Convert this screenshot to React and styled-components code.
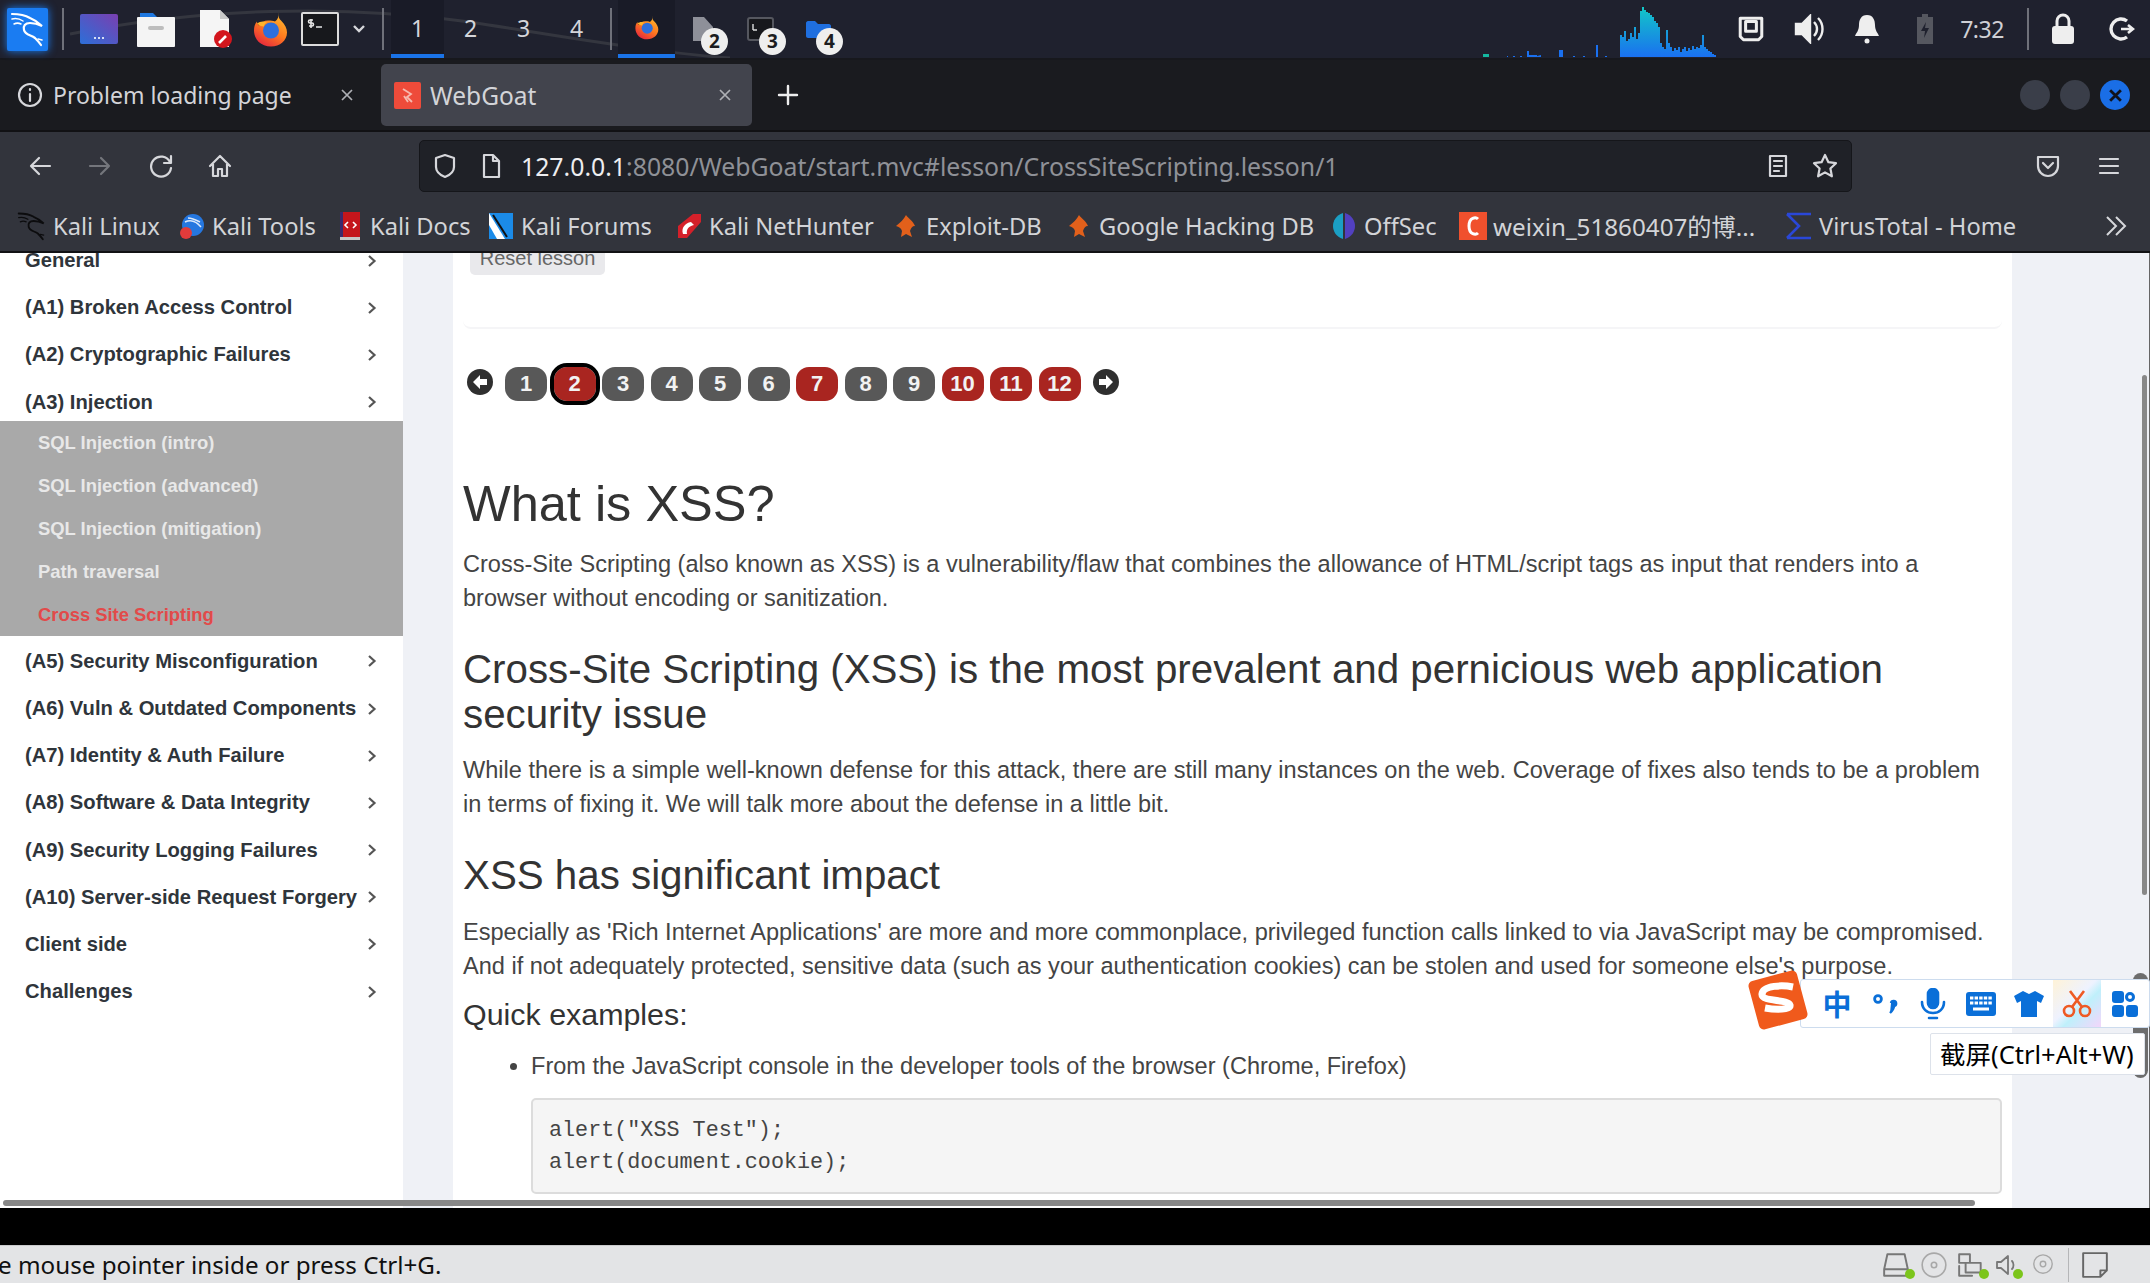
import React from "react";
import styled, { createGlobalStyle } from "styled-components";

const GlobalStyle = createGlobalStyle`
  html, body { margin: 0; padding: 0; background: #000; }
  * { box-sizing: border-box; }
`;

const Screen = styled.div`
  position: relative;
  width: 2150px;
  height: 1283px;
  overflow: hidden;
  display: flex;
  flex-direction: column;
  font-family: "Liberation Sans", Arial, sans-serif;
`;

/* ---- desktop panel ---- */
const Panel = styled.div`
  position: relative;
  flex: 0 0 60px;
  display: flex;
  align-items: flex-start;
  background: #1f212e;
  border-bottom: 2px solid #17181d;
`;

const PanelSwirl = styled.svg`
  position: absolute;
  left: 0;
  top: 0;
`;

const PanelGroup = styled.div`
  position: relative;
  display: flex;
  align-items: center;
  height: 58px;
`;

const KaliTile = styled.div`
  width: 41px;
  height: 43px;
  margin: 0 0 0 7px;
  border-radius: 2px;
  background: #1a7cf2;
  box-shadow: 0 0 8px #1a7cf2;
  display: flex;
  align-items: center;
  justify-content: center;
`;

const PanelSep = styled.div`
  width: 2px;
  height: 42px;
  margin-left: ${(p) => p.$ml}px;
  background: #6f717a;
`;

const Launcher = styled.div`
  display: flex;
  align-items: center;
  justify-content: center;
  width: ${(p) => p.$w}px;
  margin-left: ${(p) => p.$ml}px;
`;

const Workspaces = styled.div`
  display: flex;
  margin-left: 7px;
`;

const WorkspaceBtn = styled.div`
  width: 53px;
  height: 58px;
  display: flex;
  align-items: center;
  justify-content: center;
  color: #d4d5da;
  font-family: "Noto Sans", sans-serif;
  font-size: 23px;
  background: ${(p) => (p.$active ? "#191b27" : "transparent")};
  border-bottom: 4px solid ${(p) => (p.$active ? "#1a73e8" : "transparent")};
  padding-top: 2px;
`;

const WindowBtn = styled.div`
  width: 57px;
  height: 58px;
  margin-left: 6px;
  display: flex;
  align-items: center;
  justify-content: center;
  background: #191b27;
  border-bottom: 4px solid #1a73e8;
`;

const WindowGroup = styled.div`
  position: relative;
  width: ${(p) => p.$w}px;
  height: 38px;
  margin-left: ${(p) => p.$ml}px;
  align-self: flex-start;
  margin-top: 17px;
  display: flex;
  align-items: flex-start;
`;

const CountBadge = styled.div`
  position: absolute;
  right: 0;
  bottom: 0;
  width: 27px;
  height: 27px;
  border-radius: 50%;
  background: #eeeeee;
  color: #1b1c20;
  font-family: "Noto Sans", sans-serif;
  font-weight: 700;
  font-size: 19px;
  line-height: 27px;
  text-align: center;
`;

const Spacer = styled.div`
  flex: 1;
`;

const NetMeter = styled.div`
  align-self: flex-end;
  margin-bottom: 1px;
  display: flex;
`;

const Clock = styled.div`
  width: 50px;
  margin-left: 23px;
  text-align: center;
  color: #cfd0d5;
  font-family: "Noto Sans", sans-serif;
  font-size: 23px;
  letter-spacing: -0.5px;
`;

const TrayIcon = styled.div`
  display: flex;
  justify-content: center;
  width: ${(p) => p.$w}px;
  margin-left: ${(p) => p.$ml}px;
`;

const PanelEnd = styled.div`
  width: 15px;
`;

/* ---- browser chrome ---- */
const TabBar = styled.div`
  flex: 0 0 72px;
  display: flex;
  align-items: center;
  background: #1a1b1f;
  border-bottom: 2px solid #111114;
  color: #d3d4d8;
  font-family: "Noto Sans", sans-serif;
`;

const Tab = styled.div`
  display: flex;
  align-items: center;
  width: ${(p) => p.$w}px;
  height: 62px;
  margin-left: ${(p) => p.$ml}px;
  padding: 0 ${(p) => p.$pad}px 0 ${(p) => p.$padLeft}px;
  border-radius: 5px;
  background: ${(p) => (p.$active ? "#42444d" : "transparent")};
`;

const TabTitle = styled.span`
  flex: 1;
  margin-left: ${(p) => p.$ml}px;
  font-size: ${(p) => p.$size}px;
  white-space: nowrap;
`;

const WindowControls = styled.div`
  display: flex;
  gap: 10px;
  margin-left: auto;
  margin-right: 20px;
`;

const WindowDot = styled.div`
  width: 30px;
  height: 30px;
  border-radius: 50%;
  background: ${(p) => (p.$close ? "#1a6ee6" : "#3a3e49")};
  display: flex;
  align-items: center;
  justify-content: center;
`;

const NavBar = styled.div`
  flex: 0 0 68px;
  display: flex;
  align-items: center;
  background: #32343c;
`;

const NavIcon = styled.div`
  display: flex;
  justify-content: center;
  width: 30px;
  margin-left: ${(p) => p.$ml}px;
`;

const UrlBox = styled.div`
  display: flex;
  align-items: center;
  width: 1433px;
  height: 52px;
  margin-left: 184px;
  border: 1px solid #15161a;
  border-radius: 5px;
  background: #1f2127;
  font-family: "Noto Sans", sans-serif;
  font-size: 24.8px;
  color: #8f9197;
`;

const UrlIcon = styled.div`
  display: flex;
  justify-content: center;
  width: 30px;
  margin-left: ${(p) => p.$ml}px;
  margin-right: ${(p) => p.$mr || 0}px;
`;

const UrlText = styled.div`
  flex: 1;
  margin-left: 15px;
  white-space: nowrap;
`;

const UrlHost = styled.span`
  color: #eeeef0;
`;

const Bookmarks = styled.div`
  flex: 0 0 53px;
  display: flex;
  align-items: center;
  background: #32343c;
  border-bottom: 2px solid #111114;
  color: #d3d4d8;
  font-family: "Noto Sans", "Noto Sans CJK SC", sans-serif;
  font-size: 23.7px;
  padding-left: 17px;
`;

const Bookmark = styled.div`
  display: flex;
  align-items: center;
  width: ${(p) => p.$w}px;
  font-size: ${(p) => p.$size || 23.7}px;
  white-space: nowrap;
`;

const BookmarkIcon = styled.div`
  flex: 0 0 28px;
  height: 30px;
  margin-right: 6px;
  display: flex;
  align-items: center;
  justify-content: center;
`;

const BookmarkOverflow = styled.div`
  margin-left: auto;
  margin-right: 22px;
  display: flex;
`;

/* ---- page ---- */
const Page = styled.div`
  position: relative;
  flex: 1;
  display: flex;
  overflow: hidden;
  background: #eff1f6;
  border-right: 1px solid #666;
`;

const Sidebar = styled.div`
  flex: 0 0 403px;
  background: #fff;
`;

const SideScroll = styled.div`
  margin-top: -16px;
`;

const MenuItem = styled.div`
  display: flex;
  align-items: center;
  justify-content: space-between;
  height: 47.2px;
  padding: 0 26px 0 25px;
  color: #2f353b;
  font-size: 20.2px;
  font-weight: 700;
  white-space: nowrap;
`;

const SubMenu = styled.div`
  height: 215px;
  background: #a9a9a9;
  padding-top: 1px;
  margin: -5px 0 2px;
`;

const SubItem = styled.div`
  display: flex;
  align-items: center;
  height: 43px;
  padding-left: 38px;
  color: ${(p) => (p.$current ? "#e24a4a" : "#e8e8e8")};
  font-size: 18.4px;
  font-weight: 700;
`;

const Article = styled.div`
  flex: 0 0 1559px;
  margin-left: 50px;
  padding: 0 10px;
  background: #fff;
`;

const ResetCard = styled.div`
  height: 106px;
  margin-top: -30px;
  padding: 8px 0 0 7px;
  border-bottom: 2px solid #f5f5f7;
  border-radius: 8px;
`;

const ResetButton = styled.div`
  width: 135px;
  height: 44px;
  border-radius: 5px;
  background: #e9e9ec;
  color: #666;
  font-size: 20px;
  line-height: 54px;
  text-align: center;
`;

const Pager = styled.div`
  display: flex;
  align-items: center;
  height: 34px;
  margin-top: 38px;
  padding-left: 4px;
  gap: 6.5px;
`;

const PagerArrow = styled.div`
  position: relative;
  top: -2px;
  display: flex;
  margin: 0 ${(p) => p.$right}px 0 ${(p) => p.$left}px;
`;

const PageBtn = styled.div`
  flex: 0 0 42px;
  height: 34px;
  border-radius: 13px;
  background: ${(p) => (p.$done ? "#a92520" : "#585858")};
  color: #f2f2f2;
  font-size: 22px;
  font-weight: 700;
  text-align: center;
  line-height: 34px;
  outline: ${(p) => (p.$current ? "4px solid #000" : "none")};
`;

const H1 = styled.h1`
  margin: 76px 0 0;
  font-size: 50.5px;
  line-height: 54px;
  font-weight: 400;
  color: #333;
`;

const H2 = styled.h2`
  margin: 32px 0 0;
  font-size: 40.3px;
  line-height: 45px;
  font-weight: 400;
  color: #333;
`;

const H3 = styled.h3`
  margin: 32px 0 0;
  font-size: 40.3px;
  line-height: 46px;
  font-weight: 400;
  color: #333;
`;

const H4 = styled.h4`
  margin: 14px 0 0;
  font-size: 30.4px;
  line-height: 34px;
  font-weight: 400;
  color: #333;
`;

const Para = styled.p`
  margin: 17px 0 0;
  font-size: 23.55px;
  line-height: 33.5px;
  color: #444;
`;

const List = styled.ul`
  margin: 18px 0 0;
  padding-left: 68px;
  font-size: 23.55px;
  line-height: 34px;
  color: #444;
`;

const CodeBox = styled.pre`
  margin: 15px 0 0 68px;
  height: 96px;
  padding: 15px 16px;
  border: 2px solid #dcdcdc;
  border-radius: 5px;
  background: #f5f5f5;
  font-family: "Liberation Mono", monospace;
  font-size: 21.75px;
  line-height: 32px;
  color: #444;
  overflow: hidden;
`;

const HScroll = styled.div`
  position: absolute;
  left: 3px;
  bottom: 2px;
  width: 1972px;
  height: 6px;
  border-radius: 3px;
  background: #888;
`;

const VScroll = styled.div`
  position: absolute;
  right: 2px;
  top: 122px;
  width: 5px;
  height: 520px;
  border-radius: 3px;
  background: #888;
`;

const VmGap = styled.div`
  flex: 0 0 37px;
  background: #000;
`;

const StatusBar = styled.div`
  flex: 0 0 38px;
  display: flex;
  align-items: center;
  background: #e3e4e6;
  border-top: 1px solid #c9cacc;
  font-family: "Noto Sans", sans-serif;
  font-size: 24.2px;
  color: #111;
  overflow: hidden;
`;

const StatusText = styled.span`
  white-space: nowrap;
  margin-left: -2px;
`;

const StatusIcon = styled.div`
  position: relative;
  display: flex;
  margin-left: ${(p) => p.$ml}px;
  margin-right: ${(p) => p.$mr || 0}px;
`;

const StatusDot = styled.div`
  position: absolute;
  right: -3px;
  bottom: 0;
  width: 10px;
  height: 10px;
  border-radius: 50%;
  background: #7cc51c;
`;

const StatusSep = styled.div`
  width: 1px;
  height: 34px;
  margin-left: 13px;
  background: #b5b6b8;
`;

/* ---- input method toolbar ---- */
const PageTopButton = styled.div`
  position: absolute;
  left: 2133px;
  top: 973px;
  width: 15px;
  height: 105px;
  border-radius: 8px;
  background: #6d6d6d;
`;

const ImeBar = styled.div`
  position: absolute;
  left: 1800px;
  top: 979px;
  width: 350px;
  height: 49px;
  display: flex;
  align-items: center;
  padding-left: 12px;
  background: #fff;
  border: 1px solid #cddcee;
  border-radius: 3px;
`;

const ImeSlot = styled.div`
  flex: 0 0 48px;
  height: 47px;
  display: flex;
  align-items: center;
  justify-content: center;
  color: #0a6fd8;
  background: ${(p) =>
    p.$hot ? "linear-gradient(135deg,#fff3d8,#eef2ff 45%,#bff0fb 60%,#f3d6fb)" : "transparent"};
`;

const ImeHanzi = styled.span`
  font-family: "Noto Sans CJK SC", sans-serif;
  font-size: 29px;
  font-weight: 700;
  line-height: 1;
`;

const ImeLogo = styled.svg`
  position: absolute;
  left: 1745px;
  top: 967px;
`;

const ImeTip = styled.div`
  position: absolute;
  left: 1930px;
  top: 1033px;
  width: 215px;
  height: 42px;
  padding-left: 9px;
  background: #fff;
  border: 1px solid #dde2ea;
  border-radius: 2px;
  color: #000;
  font-family: "Noto Sans", "Noto Sans CJK SC", sans-serif;
  font-size: 25.5px;
  line-height: 40px;
  white-space: nowrap;
`;

/* ---- drawings ---- */
const KaliDragon = ({ size = 36, color = "#fff" }) => (
  <svg width={size} height={size} viewBox="0 0 36 36" fill="none" stroke={color} strokeWidth="2.2" strokeLinecap="round">
    <path d="M2 3c6 0 13 1 18 4 5 2 9 5 12 8-4-2-8-3-12-3-5 0-7 3-6 7 1 5 7 5 11 8 2 2 4 4 6 7" />
    <path d="M2 8c4-1 8 0 11 2M4 13c2-1 5-1 7 0M28 28l4 1" strokeWidth="1.5" />
  </svg>
);

const Firefox = ({ size = 36 }) => (
  <svg width={size} height={size} viewBox="0 0 36 36">
    <defs>
      <linearGradient id="ffg" x1="0.8" y1="0" x2="0.2" y2="1">
        <stop offset="0" stopColor="#ffbd2e" />
        <stop offset="0.5" stopColor="#ff7a1f" />
        <stop offset="1" stopColor="#e4223f" />
      </linearGradient>
    </defs>
    <path d="M26 1c1 4 0 5 3 8 4 4 6 8 6 12 0 8-7 14-16 14C9 35 2 28 2 19c0-4 1-7 3-9 0 2 1 3 2 4 2-3 5-5 9-5 3 0 5 0 7 1 3-2 4-5 3-9z" fill="url(#ffg)" />
    <circle cx="19" cy="19" r="8" fill="#2e6fdc" />
    <path d="M5 12c3-2 6-3 10-1-2 1-3 2-3 4-3 0-5-1-7-3z" fill="#ffb52c" />
  </svg>
);

const Chevron = ({ color = "#555" }) => (
  <svg width="10" height="14" viewBox="0 0 10 14" fill="none" stroke={color} strokeWidth="2.2">
    <path d="M2 2l5.5 5L2 12" />
  </svg>
);

const CloseX = ({ color = "#aeb0b5", size = 14, sw = 1.7 }) => (
  <svg width={size} height={size} viewBox="0 0 14 14" stroke={color} strokeWidth={sw}>
    <path d="M2 2l10 10M12 2L2 12" />
  </svg>
);

const Line = ({ w = 26, h = 26, children, color = "#d6d7db", sw = 2.2, fill = "none" }) => (
  <svg width={w} height={h} viewBox="0 0 26 26" fill={fill} stroke={color} strokeWidth={sw} strokeLinecap="round" strokeLinejoin="round">
    {children}
  </svg>
);

// network load, one value per 2px column
const netBars = [
  22, 20, 26, 16, 18, 24, 20, 30, 18, 24, 46, 50, 47, 45, 44, 42, 40, 36, 34, 30, 14, 10, 8, 27, 14, 10, 6, 9, 7, 10, 5,
  8, 10, 6, 9, 7, 11, 8, 10, 9, 12, 22, 10, 8, 6, 5, 3, 2,
];
const netPath = netBars.map((h, i) => `M${137 + i * 2} 52v-${h}h2v${h}z`).join("");

const NetGraph = () => (
  <svg width="234" height="52" viewBox="0 0 234 52">
    <defs>
      <linearGradient id="netg" gradientUnits="userSpaceOnUse" x1="0" y1="2" x2="0" y2="52">
        <stop offset="0" stopColor="#12c7c7" />
        <stop offset="1" stopColor="#1a70f0" />
      </linearGradient>
    </defs>
    <rect x="0" y="49" width="6" height="3" fill="#14b8a0" />
    <path
      d="M24 52v-1h1v1zM30 52v-1h2v1zM37 52v-1h2v1zM44 52v-6h2v4h8v1l4-1v2zM76 52v-7h4v7zM90 52v-1h2v1zM100 52v-1h2v1zM113 52v-12h2v12zM122 52v-1h2v1z"
      fill="#1a70f0"
    />
    <path d={netPath} fill="url(#netg)" />
  </svg>
);

const bookmarksData = [
  { label: "Kali Linux", w: 161, icon: <KaliDragon size={30} color="#0c0c0e" /> },
  { label: "Kali Tools", w: 158, icon: (
      <svg width="28" height="28" viewBox="0 0 28 28"><circle cx="15" cy="13" r="11" fill="#2577e0" /><path d="M7 10c6-3 12 0 16 5M10 6c4 0 8 2 12 4" stroke="#dce9fb" strokeWidth="1.5" fill="none" /><circle cx="8" cy="21" r="6" fill="#e23b3b" /></svg>
    ) },
  { label: "Kali Docs", w: 151, icon: (
      <svg width="24" height="30" viewBox="0 0 24 30"><rect x="2" y="1" width="20" height="26" fill="#c4161c" /><rect x="2" y="1" width="3" height="26" fill="#3a2a6c" /><rect x="2" y="26" width="20" height="3" fill="#c6c6c6" /><path d="M10 11l-3 3 3 3M15 11l3 3-3 3" stroke="#fff" strokeWidth="1.6" fill="none" /></svg>
    ) },
  { label: "Kali Forums", w: 188, icon: (
      <svg width="28" height="30" viewBox="0 0 28 30"><path d="M2 2h24v26H2z" fill="#1b8be8" /><path d="M2 2l16 26h-8L2 14z" fill="#fff" /><path d="M6 4l14 22" stroke="#111" strokeWidth="2" /></svg>
    ) },
  { label: "Kali NetHunter", w: 217, icon: (
      <svg width="28" height="28" viewBox="0 0 28 28"><path d="M3 14L18 2h8v8L12 26H3z" fill="#d4202a" /><path d="M8 22c-2-6 2-11 8-12l3 3c-5 1-8 4-7 9z" fill="#fff" /></svg>
    ) },
  { label: "Exploit-DB", w: 173, icon: (
      <svg width="24" height="26" viewBox="0 0 24 26"><path d="M12 2c2 3 7 6 9 11-3 0-4 2-5 5l2 6-6-3-5 3 1-6c-1-3-3-4-6-5 4-3 8-7 10-11z" fill="#e2601b" /></svg>
    ) },
  { label: "Google Hacking DB", w: 265, icon: (
      <svg width="24" height="26" viewBox="0 0 24 26"><path d="M12 2c2 3 7 6 9 11-3 0-4 2-5 5l2 6-6-3-5 3 1-6c-1-3-3-4-6-5 4-3 8-7 10-11z" fill="#e2601b" /></svg>
    ) },
  { label: "OffSec", w: 129, icon: (
      <svg width="24" height="30" viewBox="0 0 24 30"><path d="M11 2C4 4 1 10 1 15s3 11 10 13z" fill="#1b9fc4" /><path d="M13 2c7 2 10 8 10 13s-3 11-10 13z" fill="#5240c0" /></svg>
    ) },
  { label: "weixin_51860407的博...", w: 326, size: 24.2, icon: (
      <svg width="28" height="28" viewBox="0 0 28 28"><rect width="28" height="28" fill="#f0502d" /><path d="M19 7c-2-2-9-2-9 7s7 9 9 7" stroke="#fff" strokeWidth="3" fill="none" /></svg>
    ) },
  { label: "VirusTotal - Home", w: 240, icon: (
      <svg width="28" height="28" viewBox="0 0 28 28" fill="none" stroke="#2a47d8" strokeWidth="2.6"><path d="M2 2h24M2 26h24M2 2l12 12L2 26" /></svg>
    ) },
];

const menuTop = ["General", "(A1) Broken Access Control", "(A2) Cryptographic Failures", "(A3) Injection"];
const subMenu = ["SQL Injection (intro)", "SQL Injection (advanced)", "SQL Injection (mitigation)", "Path traversal"];
const menuBottom = [
  "(A5) Security Misconfiguration",
  "(A6) Vuln & Outdated Components",
  "(A7) Identity & Auth Failure",
  "(A8) Software & Data Integrity",
  "(A9) Security Logging Failures",
  "(A10) Server-side Request Forgery",
  "Client side",
  "Challenges",
];

const lessonPages = [
  { n: 1 },
  { n: 2, done: true, current: true },
  { n: 3 },
  { n: 4 },
  { n: 5 },
  { n: 6 },
  { n: 7, done: true },
  { n: 8 },
  { n: 9 },
  { n: 10, done: true },
  { n: 11, done: true },
  { n: 12, done: true },
];

const PagerCircle = ({ dir }) => (
  <svg width="26" height="26" viewBox="0 0 26 26">
    <circle cx="13" cy="13" r="13" fill="#2f2f2f" />
    <path d={dir === "left" ? "M13 6l-7 7 7 7v-4h7v-6h-7z" : "M13 6l7 7-7 7v-4H6v-6h7z"} fill="#fff" />
  </svg>
);

export default function App() {
  return (
    <Screen>
      <GlobalStyle />
      <Panel>
        <PanelSwirl width="1000" height="58" viewBox="0 0 1000 58" fill="none">
          <path d="M70 34C200 8 340 4 470 22c90 14 180 30 260 36" stroke="#34363f" strokeWidth="3" />
        </PanelSwirl>
        <PanelGroup>
          <KaliTile>
            <KaliDragon size={36} />
          </KaliTile>
          <PanelSep $ml={14} />
          <Launcher $w={38} $ml={16}>
            <svg width="38" height="30" viewBox="0 0 38 30">
              <defs>
                <linearGradient id="deskg" x1="0" y1="1" x2="1" y2="0">
                  <stop offset="0" stopColor="#2c6fd8" />
                  <stop offset="1" stopColor="#7a3fb0" />
                </linearGradient>
              </defs>
              <rect width="38" height="30" rx="2" fill="url(#deskg)" />
              <path d="M14 24h2M18 24h2M22 24h2" stroke="#d8dff5" strokeWidth="2" />
            </svg>
          </Launcher>
          <Launcher $w={38} $ml={19}>
            <svg width="38" height="36" viewBox="0 0 38 36">
              <path d="M3 2h13l4 4h15v8H3z" fill="#1f78e0" />
              <rect x="0" y="6" width="38" height="30" rx="1" fill="#f4f4f4" />
              <rect x="11" y="15" width="16" height="4" rx="2" fill="#bdbdbd" />
            </svg>
          </Launcher>
          <Launcher $w={36} $ml={23}>
            <svg width="36" height="38" viewBox="0 0 36 38">
              <path d="M2 0h20l9 9v28H2z" fill="#f5f5f5" />
              <path d="M22 0l9 9h-9z" fill="#c9c9c9" />
              <circle cx="25" cy="29" r="9" fill="#d3161d" />
              <path d="M21 33l7-7" stroke="#fff" strokeWidth="2.6" />
            </svg>
          </Launcher>
          <Launcher $w={36} $ml={18}>
            <Firefox size={37} />
          </Launcher>
          <Launcher $w={38} $ml={13}>
            <svg width="38" height="34" viewBox="0 0 38 34">
              <rect x="1" y="1" width="36" height="32" rx="1" fill="#17181c" stroke="#dcdcdc" strokeWidth="2" />
              <path d="M10 7v9M12 8H9c-2 0-2 3 0 3h2c2 0 2 3 0 3H8M15 15h6" stroke="#e6e6e6" strokeWidth="1.6" fill="none" />
            </svg>
          </Launcher>
          <Launcher $w={14} $ml={13}>
            <svg width="14" height="10" viewBox="0 0 14 10" fill="none" stroke="#d6d7db" strokeWidth="2.4">
              <path d="M2 2l5 5 5-5" />
            </svg>
          </Launcher>
          <PanelSep $ml={16} />
          <Workspaces>
            <WorkspaceBtn $active>1</WorkspaceBtn>
            <WorkspaceBtn>2</WorkspaceBtn>
            <WorkspaceBtn>3</WorkspaceBtn>
            <WorkspaceBtn>4</WorkspaceBtn>
          </Workspaces>
          <PanelSep $ml={7} />
          <WindowBtn>
            <Firefox size={25} />
          </WindowBtn>
          <WindowGroup $w={35} $ml={18}>
            <svg width="20" height="24" viewBox="0 0 20 24">
              <path d="M0 0h11l9 10v14H0z" fill="#8e9099" />
            </svg>
            <CountBadge>2</CountBadge>
          </WindowGroup>
          <WindowGroup $w={39} $ml={19}>
            <svg width="27" height="24" viewBox="0 0 27 24">
              <rect x="1" y="1" width="25" height="22" rx="2" fill="#17181c" stroke="#55575f" strokeWidth="2" />
              <path d="M6 7v6M6 13h4" stroke="#ddd" strokeWidth="1.4" />
            </svg>
            <CountBadge>3</CountBadge>
          </WindowGroup>
          <WindowGroup $w={37} $ml={20}>
            <svg width="25" height="17" viewBox="0 0 25 17" style={{ marginTop: 4 }}>
              <path d="M0 2c0-1 1-2 2-2h7l3 3h11c1 0 2 1 2 2v10c0 1-1 2-2 2H2c-1 0-2-1-2-2z" fill="#1f6fe0" />
            </svg>
            <CountBadge>4</CountBadge>
          </WindowGroup>
        </PanelGroup>
        <Spacer />
        <PanelGroup>
          <NetMeter>
            <NetGraph />
          </NetMeter>
          <TrayIcon $w={28} $ml={20}>
            <Line w={28} h={28} color="#eee" sw={2.8}>
              <path d="M3 3h20v17l-3 3H6l-3-3zM8 6h10v9H8z" />
            </Line>
          </TrayIcon>
          <TrayIcon $w={32} $ml={29}>
            <svg width="32" height="30" viewBox="0 0 32 30" fill="none" stroke="#eee" strokeWidth="2.4">
              <path d="M2 10h6l8-8v26l-8-8H2z" fill="#eee" />
              <path d="M20 8c4 4 4 10 0 14M24 4c6 6 6 16 0 22" />
            </svg>
          </TrayIcon>
          <TrayIcon $w={26} $ml={28}>
            <svg width="26" height="30" viewBox="0 0 26 30">
              <path d="M13 1c6 0 8 5 8 10 0 6 3 8 4 11H1c1-3 4-5 4-11 0-5 2-10 8-10z" fill="#eee" />
              <circle cx="13" cy="27" r="2.5" fill="#eee" />
            </svg>
          </TrayIcon>
          <TrayIcon $w={18} $ml={36}>
            <svg width="18" height="30" viewBox="0 0 18 30">
              <rect x="1" y="3" width="16" height="27" fill="#55575f" />
              <rect x="6" y="0" width="6" height="3" fill="#55575f" />
              <path d="M10 8l-5 9h4l-1 7 5-10H9z" fill="#1f212e" />
            </svg>
          </TrayIcon>
          <Clock>7:32</Clock>
          <PanelSep $ml={20} />
          <TrayIcon $w={26} $ml={21}>
            <svg width="26" height="32" viewBox="0 0 26 32" fill="none">
              <rect x="2" y="13" width="22" height="18" rx="3" fill="#eee" />
              <path d="M7 13V8a6 6 0 0 1 12 0v5" stroke="#eee" strokeWidth="3" />
            </svg>
          </TrayIcon>
          <TrayIcon $w={26} $ml={33}>
            <svg width="26" height="26" viewBox="0 0 26 26" fill="none" stroke="#eee" strokeWidth="3.4">
              <path d="M18 5a10 10 0 1 0 0 16" />
              <path d="M12 13h12M19 9l5 4-5 4" strokeWidth="2.6" />
            </svg>
          </TrayIcon>
          <PanelEnd />
        </PanelGroup>
      </Panel>

      <TabBar>
        <Tab $w={370} $ml={0} $pad={16} $padLeft={17}>
          <Line>
            <circle cx="13" cy="13" r="11" />
            <path d="M13 12v7M13 7v1" />
          </Line>
          <TabTitle $ml={10} $size={23}>Problem loading page</TabTitle>
          <CloseX />
        </Tab>
        <Tab $active $w={371} $ml={11} $pad={20} $padLeft={13}>
          <svg width="27" height="27" viewBox="0 0 27 27">
            <rect width="27" height="27" rx="2" fill="#ee4b3a" />
            <path d="M9 7l8 5-4 3 5 5M10 14l4 6" stroke="#f7b9ae" strokeWidth="1.8" fill="none" />
          </svg>
          <TabTitle $ml={9} $size={24.5}>WebGoat</TabTitle>
          <CloseX />
        </Tab>
        <NavIcon $ml={21}>
          <Line color="#eee" sw={2.4}>
            <path d="M13 4v18M4 13h18" />
          </Line>
        </NavIcon>
        <WindowControls>
          <WindowDot />
          <WindowDot />
          <WindowDot $close>
            <CloseX color="#10131c" size={15} sw={2.6} />
          </WindowDot>
        </WindowControls>
      </TabBar>

      <NavBar>
        <NavIcon $ml={25}>
          <Line>
            <path d="M23 13H4M12 5l-8 8 8 8" />
          </Line>
        </NavIcon>
        <NavIcon $ml={30}>
          <Line color="#74767c">
            <path d="M3 13h19M14 5l8 8-8 8" />
          </Line>
        </NavIcon>
        <NavIcon $ml={31}>
          <Line>
            <path d="M22 9a10 10 0 1 0 1 6M23 3v7h-7" />
          </Line>
        </NavIcon>
        <NavIcon $ml={29}>
          <Line>
            <path d="M3 13L13 3l10 10M6 11v12h5v-7h4v7h5V11" />
          </Line>
        </NavIcon>
        <UrlBox>
          <UrlIcon $ml={10}>
            <Line>
              <path d="M13 2l9 3v9c0 5-4 8-9 10-5-2-9-5-9-10V5z" />
            </Line>
          </UrlIcon>
          <UrlIcon $ml={16}>
            <Line>
              <path d="M6 2h9l6 6v16H6zM15 2v6h6" />
            </Line>
          </UrlIcon>
          <UrlText>
            <UrlHost>127.0.0.1</UrlHost>:8080/WebGoat/start.mvc#lesson/CrossSiteScripting.lesson/1
          </UrlText>
          <UrlIcon $ml={0}>
            <Line>
              <path d="M5 3h16v20H5zM9 8h8M9 13h8M9 18h5" />
            </Line>
          </UrlIcon>
          <UrlIcon $ml={17} $mr={11}>
            <Line>
              <path d="M13 2l3.4 7.2 7.6 1-5.6 5.3 1.5 7.8-6.9-3.9-6.9 3.9 1.5-7.8L2 10.2l7.6-1z" />
            </Line>
          </UrlIcon>
        </UrlBox>
        <NavIcon $ml={181}>
          <Line>
            <path d="M3 4h20v9a10 10 0 0 1-20 0zM8 10l5 5 5-5" />
          </Line>
        </NavIcon>
        <NavIcon $ml={31}>
          <Line>
            <path d="M4 6h18M4 13h18M4 20h18" />
          </Line>
        </NavIcon>
      </NavBar>

      <Bookmarks>
        {bookmarksData.map((b) => (
          <Bookmark key={b.label} $w={b.w} $size={b.size}>
            <BookmarkIcon>{b.icon}</BookmarkIcon>
            {b.label}
          </Bookmark>
        ))}
        <BookmarkOverflow>
          <svg width="24" height="22" viewBox="0 0 24 22" fill="none" stroke="#d6d7db" strokeWidth="2">
            <path d="M3 2l9 9-9 9M12 2l9 9-9 9" />
          </svg>
        </BookmarkOverflow>
      </Bookmarks>

      <Page>
        <Sidebar>
          <SideScroll>
            {menuTop.map((label) => (
              <MenuItem key={label}>
                {label}
                <Chevron />
              </MenuItem>
            ))}
            <SubMenu>
              {subMenu.map((label) => (
                <SubItem key={label}>{label}</SubItem>
              ))}
              <SubItem $current>Cross Site Scripting</SubItem>
            </SubMenu>
            {menuBottom.map((label) => (
              <MenuItem key={label}>
                {label}
                <Chevron />
              </MenuItem>
            ))}
          </SideScroll>
        </Sidebar>
        <Article>
          <ResetCard>
            <ResetButton>Reset lesson</ResetButton>
          </ResetCard>
          <Pager>
            <PagerArrow $left={0} $right={5.5}>
              <PagerCircle dir="left" />
            </PagerArrow>
            {lessonPages.map((p) => (
              <PageBtn key={p.n} $done={p.done} $current={p.current}>
                {p.n}
              </PageBtn>
            ))}
            <PagerArrow $left={6} $right={0}>
              <PagerCircle dir="right" />
            </PagerArrow>
          </Pager>
          <H1>What is XSS?</H1>
          <Para>
            Cross-Site Scripting (also known as XSS) is a vulnerability/flaw that combines the allowance of HTML/script tags as input that renders into a browser without encoding or sanitization.
          </Para>
          <H2>Cross-Site Scripting (XSS) is the most prevalent and pernicious web application security issue</H2>
          <Para>
            While there is a simple well-known defense for this attack, there are still many instances on the web. Coverage of fixes also tends to be a problem in terms of fixing it. We will talk more about the defense in a little bit.
          </Para>
          <H3>XSS has significant impact</H3>
          <Para>
            Especially as 'Rich Internet Applications' are more and more commonplace, privileged function calls linked to via JavaScript may be compromised. And if not adequately protected, sensitive data (such as your authentication cookies) can be stolen and used for someone else's purpose.
          </Para>
          <H4>Quick examples:</H4>
          <List>
            <li>From the JavaScript console in the developer tools of the browser (Chrome, Firefox)</li>
          </List>
          <CodeBox>{`alert("XSS Test");
alert(document.cookie);`}</CodeBox>
        </Article>
        <HScroll />
        <VScroll />
      </Page>

      <VmGap />

      <StatusBar>
        <StatusText>e mouse pointer inside or press Ctrl+G.</StatusText>
        <Spacer />
        <StatusIcon $ml={0}>
          <Line w={32} h={28} color="#777" sw={1.8}>
            <path d="M5 3h16l3 14v6H2v-6zM2 17h22" />
          </Line>
          <StatusDot />
        </StatusIcon>
        <StatusIcon $ml={8}>
          <Line w={28} h={28} color="#a8a8a8" sw={1.5}>
            <circle cx="13" cy="13" r="11" />
            <circle cx="13" cy="13" r="2.5" />
          </Line>
        </StatusIcon>
        <StatusIcon $ml={8}>
          <Line w={30} h={28} color="#777" sw={1.8}>
            <path d="M2 3h10v8H2zM8 11h14v9H8zM2 14v9h12" />
          </Line>
          <StatusDot />
        </StatusIcon>
        <StatusIcon $ml={8}>
          <Line w={26} h={28} color="#777" sw={1.8}>
            <path d="M3 10h4l7-6v18l-7-6H3zM18 9c2 2 2 6 0 8" />
          </Line>
          <StatusDot />
        </StatusIcon>
        <StatusIcon $ml={11}>
          <Line w={24} h={28} color="#a8a8a8" sw={1.5}>
            <circle cx="13" cy="12" r="10" />
            <circle cx="13" cy="12" r="3" />
          </Line>
        </StatusIcon>
        <StatusSep />
        <StatusIcon $ml={12} $mr={41}>
          <Line w={28} h={28} color="#666" sw={1.8}>
            <path d="M2 2h22v16l-6 6H2zM24 18h-6v6" />
          </Line>
        </StatusIcon>
      </StatusBar>

      <PageTopButton />
      <ImeBar>
        <ImeSlot><ImeHanzi>中</ImeHanzi></ImeSlot>
        <ImeSlot>
          <svg width="26" height="26" viewBox="0 0 26 26" fill="none" stroke="currentColor" strokeWidth="2.8">
            <circle cx="6" cy="8" r="3.4" />
            <path d="M19 12a2.6 2.6 0 1 1 3 3c0 3-2 5-4 7" fill="currentColor" strokeWidth="2.4" />
          </svg>
        </ImeSlot>
        <ImeSlot>
          <svg width="26" height="32" viewBox="0 0 26 32" fill="none" stroke="currentColor" strokeWidth="2.6" strokeLinecap="round">
            <rect x="8" y="1" width="10" height="19" rx="5" fill="currentColor" />
            <path d="M2 14c0 7 5 11 11 11s11-4 11-11M9 30h8" />
          </svg>
        </ImeSlot>
        <ImeSlot>
          <svg width="30" height="24" viewBox="0 0 30 24">
            <rect width="30" height="24" rx="3" fill="currentColor" />
            <path d="M4 6h22M4 11h22" stroke="#fff" strokeWidth="3" strokeDasharray="3.4 1.2" />
            <path d="M7 17h16" stroke="#fff" strokeWidth="3" />
          </svg>
        </ImeSlot>
        <ImeSlot>
          <svg width="30" height="26" viewBox="0 0 30 26" fill="currentColor">
            <path d="M9 0l6 3 6-3 9 5-3 7-4-2v16H7V10l-4 2-3-7z" />
          </svg>
        </ImeSlot>
        <ImeSlot $hot>
          <svg width="30" height="28" viewBox="0 0 30 28" fill="none" stroke="#ee5a24" strokeWidth="2.6">
            <circle cx="7" cy="21" r="5" />
            <circle cx="23" cy="21" r="5" />
            <path d="M10 17L22 1M20 17L8 1" />
          </svg>
        </ImeSlot>
        <ImeSlot>
          <svg width="26" height="26" viewBox="0 0 26 26" fill="currentColor">
            <rect x="0" y="0" width="12" height="12" rx="3" />
            <path d="M18 1a5 5 0 1 1 0 10 5 5 0 0 1 0-10zm0 3a2 2 0 1 0 0 4 2 2 0 0 0 0-4z" />
            <rect x="0" y="14" width="12" height="12" rx="3" />
            <rect x="14" y="14" width="12" height="12" rx="3" />
          </svg>
        </ImeSlot>
      </ImeBar>
      <ImeLogo width="66" height="66" viewBox="0 0 66 66">
        <rect x="8" y="8" width="50" height="50" rx="5" fill="#f05a1c" transform="rotate(-15 33 33)" />
        <path d="M48 20c-10-2-30-2-31 7-1 8 26 5 28 11 1 5-14 5-25 3" fill="none" stroke="#fff" strokeWidth="7" />
      </ImeLogo>
      <ImeTip>截屏(Ctrl+Alt+W)</ImeTip>
    </Screen>
  );
}
